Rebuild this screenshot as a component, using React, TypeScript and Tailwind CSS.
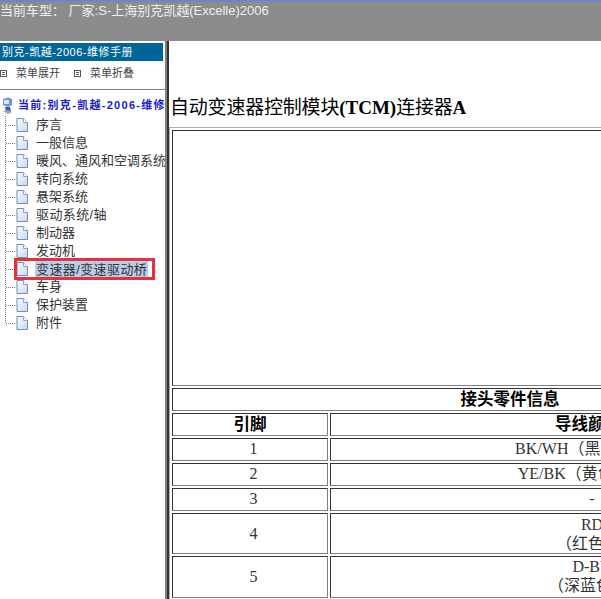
const menuItems = [
  "序言",
  "一般信息",
  "暖风、通风和空调系统",
  "转向系统",
  "悬架系统",
  "驱动系统/轴",
  "制动器",
  "发动机",
  "变速器/变速驱动桥",
  "车身",
  "保护装置",
  "附件",
];

const rows = [
  { pin: "1", lines: ["BK/WH（黑色/白色）"], height: "h-[23px] pb-[2px]" },
  { pin: "2", lines: ["YE/BK（黄色/黑色）"], height: "h-[23px] pb-[2px]" },
  { pin: "3", lines: ["-"], height: "h-[23px] pb-[2px]" },
  { pin: "4", lines: ["RD", "（红色）"], height: "h-[41px]" },
  { pin: "5", lines: ["D-BU", "（深蓝色）"], height: "h-[41px] pb-[2px]" },
];

const cell = "border border-t-[#333] border-l-[#333] border-r-[#808080] border-b-[#808080] p-0 text-center";

function DocIcon() {
  return (
    <svg width="14" height="16" viewBox="0 0 14 16" className="shrink-0">
      <defs>
        <linearGradient id="docFill" x1="0" y1="0" x2="1" y2="1">
          <stop offset="0" stopColor="#fafcff" />
          <stop offset="1" stopColor="#c6d9f2" />
        </linearGradient>
      </defs>
      <path d="M2 1.5H8.5L12.5 5.5V14.5H2Z" fill="url(#docFill)" stroke="#6f8db8" />
      <path d="M8.5 1.5V5.5H12.5" fill="#fff" stroke="#8ba6cb" />
    </svg>
  );
}

function Connector({ last }: { last: boolean }) {
  return (
    <svg width="15" height="18" viewBox="0 0 15 18" className="shrink-0">
      <path d={last ? "M5.5 0V9" : "M5.5 0V18"} stroke="#777" strokeDasharray="1 1" fill="none" />
      <path d="M6 9.5H15" stroke="#777" strokeDasharray="1 1" fill="none" />
    </svg>
  );
}

function BoxIcon() {
  return (
    <svg width="7" height="7" viewBox="0 0 7 7" className="shrink-0">
      <rect x="0.5" y="0.5" width="6" height="6" fill="#fff" stroke="#555" />
      <path d="M2 2.5H5M2 4.5H5" stroke="#555" />
    </svg>
  );
}

function PcIcon() {
  return (
    <svg width="15" height="18" viewBox="0 0 15 18" className="shrink-0">
      <path d="M3 2L8 0.5L12 2V8L8 10L3 8Z" fill="#6f94cf" />
      <path d="M4 3H9V7H4Z" fill="#d5e6f7" />
      <path d="M5 10H10L11 15H6Z" fill="#2f62b0" />
      <path d="M3 14L8 13L12 15L8 17Z" fill="#8fa3bd" />
    </svg>
  );
}

export default function App() {
  return (
    <div className="w-[601px] h-[599px] overflow-hidden flex flex-col bg-white font-['Liberation_Sans','Noto_Sans_CJK_SC',sans-serif]">
      <div className="h-[41px] shrink-0 bg-[#8c8c8c] border-t-2 border-[#6f86c4] text-[13px] leading-[16px] text-[#efefef] whitespace-nowrap pt-px">
        当前车型： 厂家:S-上海别克凯越(Excelle)2006
      </div>

      <div className="flex-1 flex min-h-0">
        <aside className="w-[165px] shrink-0 overflow-hidden pt-[2px]">
          <div className="w-[163px] h-[18px] bg-[#006699] text-white text-[11px] tracking-[0.5px] leading-[18px] pl-[2px] whitespace-nowrap">
            别克-凯越-2006-维修手册
          </div>
          <div className="h-[29px] flex items-center border-b border-[#808080] pb-[3px] text-[11px] text-[#444] whitespace-nowrap">
            <BoxIcon />
            <span className="ml-[9px]">菜单展开</span>
            <span className="ml-[14px]"><BoxIcon /></span>
            <span className="ml-[9px]">菜单折叠</span>
          </div>
          <div className="h-[27px] flex items-center pt-[4px] text-[11px] tracking-[1.3px] font-bold text-[#1a1ad0] whitespace-nowrap">
            <PcIcon />
            <span className="ml-[3px]">当前:别克-凯越-2006-维修</span>
          </div>
          <ul className="-mt-[1px]">
            {menuItems.map((item, i) => {
              const active = item.startsWith("变速器");
              const hasSlash = item.includes("/");
              return (
                <li key={item} className={hasSlash ? "h-[18px] flex items-center whitespace-nowrap text-[13px] text-[#333] tracking-[0.4px]" : "h-[18px] flex items-center whitespace-nowrap text-[13px] text-[#333]"}>
                  <Connector last={i === menuItems.length - 1} />
                  <DocIcon />
                  <span className={active ? "ml-[6px] px-px bg-[#b9cde8] leading-[17px]" : "ml-[6px] px-px"}>{item}</span>
                </li>
              );
            })}
          </ul>
          <div className="absolute left-[14px] top-[258px] w-[141px] h-[22px] border-[3px] border-[#e5323a]" />
        </aside>

        <div className="w-[4px] shrink-0 bg-[#333] border-l-2 border-[#808080]" />

        <main className="flex-1 min-w-0 overflow-hidden pl-[2px] font-['Liberation_Serif','Noto_Sans_CJK_SC',serif]">
          <h1 className="mt-[54px] -ml-[1px] h-[34px] text-[19px] leading-[26px] font-bold text-black whitespace-nowrap">
            <span className="font-normal tracking-[-0.2px]">自动变速器控制模块</span>(TCM)<span className="font-normal tracking-[-0.2px]">连接器</span>A
          </h1>
          <table className="w-[680px] table-fixed border-separate border-spacing-0.5 border border-[#aaa] -ml-[2px] -mt-[2px] text-[#333] text-[16px] leading-[19px]">
            <colgroup>
              <col className="w-[156px]" />
              <col />
            </colgroup>
            <tbody>
              <tr>
                <td colSpan={2} className={`${cell} h-[256px]`} />
              </tr>
              <tr>
                <td colSpan={2} className={`${cell} h-[23px] pl-[2px] font-bold text-black text-[16.5px]`}>接头零件信息</td>
              </tr>
              <tr>
                <td className={`${cell} h-[23px] font-bold text-black text-[16.5px]`}>引脚</td>
                <td className={`${cell} font-bold text-black text-[16.5px]`}>导线颜色</td>
              </tr>
              {rows.map((row) => (
                <tr key={row.pin}>
                  <td className={`${cell} ${row.height} pl-[7px]`}>{row.pin}</td>
                  <td className={`${cell} ${row.height} pl-[8px]`}>
                    {row.lines.map((line) => (
                      <div key={line} className={line.startsWith("（") ? "pr-[8px]" : ""}>{line}</div>
                    ))}
                  </td>
                </tr>
              ))}
            </tbody>
          </table>
        </main>
      </div>
    </div>
  );
}
